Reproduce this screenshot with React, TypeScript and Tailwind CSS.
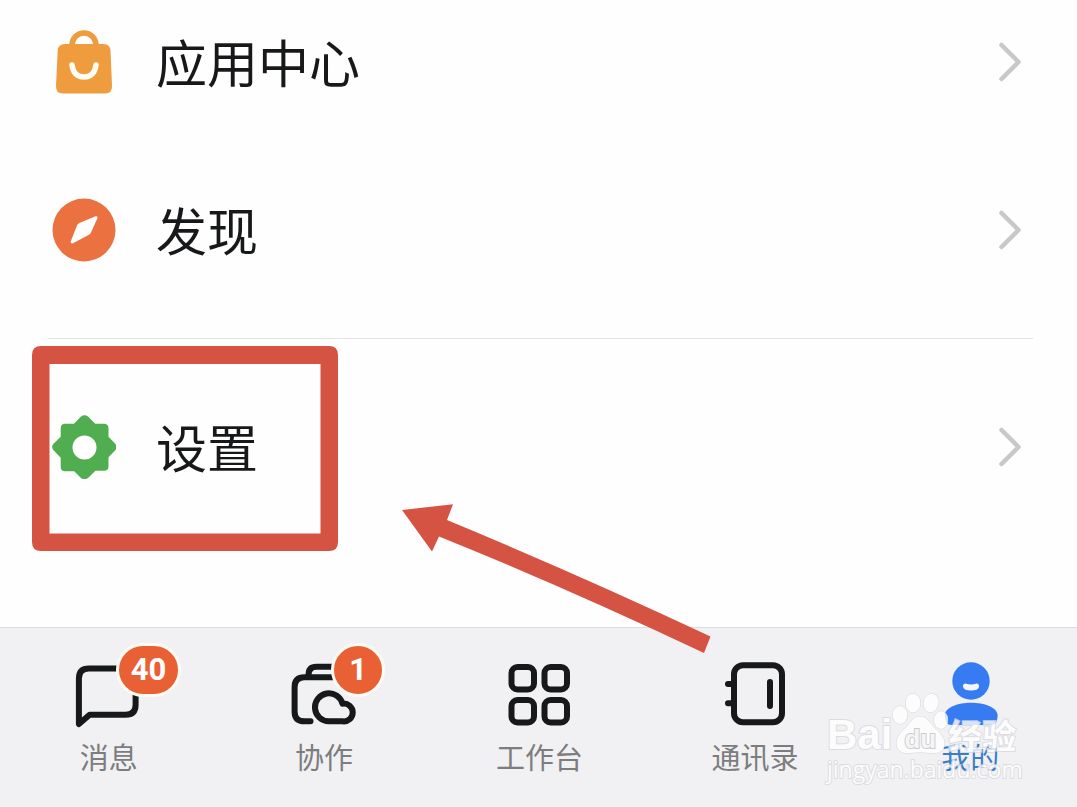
import type { ReactNode } from "react";

const menuIcons = {
    apps: (
        <svg className="size-16" viewBox="0 0 64 64" fill="none">
            <path d="M20 17v-2a12 12 0 0 1 24 0v2" stroke="#ee9c3e" strokeWidth="5.500" />
            <path d="M13 14h38.500q6.500 0 7 6.500l1.500 35.500q.3 7.500-7 7.500H11q-7.300 0-7-7.500l1.700-35.500q.4-6.500 7.300-6.500z" fill="#ee9c3e" />
            <path d="M20 35c1 7.500 5 12 12 12s11-4.500 12-12" stroke="#fffdf4" strokeWidth="5.500" strokeLinecap="round" />
        </svg>
    ),
    discover: (
        <svg className="size-16" viewBox="0 0 64 64">
            <circle cx="32" cy="32" r="31.500" fill="#eb7141" />
            <path d="M27.500 25 43.500 18.300q2.600-.7 1.900 1.900L39 34.500q-.7 1.500-2.500 2.500L21 45.300q-2.800.8-2.200-2L25 27.500q.8-1.700 2.500-2.500z" fill="#fff" />
        </svg>
    ),
    settings: (
        <svg className="size-16" viewBox="0 0 64 64">
            <path
                d="M29 1.500q3.500-2.500 7 0l7.300 7.200H52q4.500 0 4.500 4.500v8.500l7 7.300q2 3 0 6l-7 7.300v9q0 4.500-4.500 4.500h-8.500L36 63q-3.500 2.500-7 0l-6.800-6.700h-9q-4.500 0-4.500-4.500v-9L1.300 35q-2.300-3 0-6l7.400-7.300v-8.500q0-4.500 4.500-4.500h8.800z"
                fill="#50ad50"
            />
            <circle cx="32.500" cy="32.500" r="12" fill="#fff" />
        </svg>
    ),
};

const tabs = [
    {
        title: "消息",
        badge: "40",
        icon: (
            <path d="M2.900 62V16.500q0-10 10-10h36.700q10 0 10 10v26.200q0 10-10 10h-36Z" />
        ),
    },
    {
        title: "协作",
        badge: "1",
        icon: (
            <>
                <path d="M19.500 59.300h-6q-9.900 0-9.900-9.900V25.200q0-9.900 9.900-9.900H45" />
                <path d="M17.600 14v-1.500q0-7.800 7.800-7.800H45" />
                <path d="M37.900 59.300a14 14 0 1 1 13.600-17.600a8.900 8.900 0 1 1 0 17.600z" />
            </>
        ),
    },
    {
        title: "工作台",
        icon: (
            <>
                <rect x="5.500" y="5" width="22.500" height="22.500" rx="6" />
                <rect x="38.500" y="5" width="22.500" height="22.500" rx="6" />
                <rect x="5.500" y="38" width="22.500" height="22.500" rx="6" />
                <rect x="38.500" y="38" width="22.500" height="22.500" rx="6" />
            </>
        ),
    },
    {
        title: "通讯录",
        icon: (
            <>
                <rect x="12" y="3.300" width="48" height="57" rx="9" />
                <path d="M48 20v24M6 22h5M6 41.300h5" />
            </>
        ),
    },
    {
        title: "我的",
        active: true,
        icon: (
            <g stroke="none">
                <circle cx="34" cy="19" r="18.700" fill="#367bf2" />
                <path d="M28.500 21.500q5.500 2.200 11 0q2.500 0 2.500 2.500v1q-1 3.500-8 3.500T26 25v-1q0-2.500 2.500-2.500z" fill="#f1f6fd" />
                <path d="M7.700 53C8.500 45 21 40.700 34.200 40.700S60 45 60.700 53q0 10-7 10h-39q-7 0-7-10z" fill="#367bf2" />
            </g>
        ),
    },
];

function MenuRow({ icon, title }: { icon: ReactNode; title: string }) {
    return (
        <button type="button" className="flex h-[124px] w-full items-center pr-[55px] pl-[52px] text-left">
            {icon}
            <span className="ml-10 flex-1 pb-0.5 text-[51px] leading-[60px] text-[#17181a]">{title}</span>
            <svg className="h-10 w-6" viewBox="0 0 24 40" fill="none" stroke="#c8c8c8" strokeWidth="4.500" strokeLinecap="round" strokeLinejoin="round">
                <path d="m3.500 3 17 17-17 17" />
            </svg>
        </button>
    );
}

function Watermark() {
    return (
        <div className="pointer-events-none absolute right-14 bottom-6 w-[194px] font-bold text-white opacity-80 [-webkit-text-stroke:2px_#d8d8dc] [paint-order:stroke_fill]">
            <div className="flex h-[62px] items-end">
                <span className="font-['Liberation_Sans',sans-serif] text-[42px] leading-10">Bai</span>
                <div className="relative h-[62px] w-14">
                    <svg className="h-[62px] w-14" viewBox="0 0 56 62" fill="white" stroke="#d0d0d4">
                        <ellipse cx="8" cy="22" rx="7.500" ry="9" />
                        <ellipse cx="21" cy="10" rx="7.500" ry="9.500" />
                        <ellipse cx="39" cy="10" rx="7.500" ry="9.500" transform="rotate(12 39 10)" />
                        <ellipse cx="49" cy="27" rx="7" ry="9" />
                        <path d="M28 23.500c8 0 10 7 15 12 6 6 9.500 9 9.500 15 0 7-5 9.700-10.500 9.700-5 0-9-1-14-1s-8 1-13 1C9 60.200 4.500 57 4.500 50c0-6 4-10 9-15 5.500-5 7-11.500 14.500-11.500z" />
                    </svg>
                    <span className="absolute inset-x-0 bottom-1 text-center font-['Liberation_Sans',sans-serif] text-[26px] leading-6 text-[#f6f6f7] [-webkit-text-stroke:2px_#c4c4c8]">du</span>
                </div>
                <span className="text-[34px] leading-10">经验</span>
            </div>
            <div className="font-['Open_Sans',sans-serif] text-[23px] leading-7 font-normal">jingyan.baidu.com</div>
        </div>
    );
}

export default function App() {
    return (
        <div className="flex min-h-screen flex-col bg-[#fefefe] font-['Noto_Sans_CJK_SC',sans-serif]">
            <main className="flex-1">
                <div className="flex flex-col gap-11">
                    <MenuRow icon={menuIcons.apps} title="应用中心" />
                    <MenuRow icon={menuIcons.discover} title="发现" />
                </div>

                <hr className="mt-[46px] mr-11 mb-[46px] ml-12 border-[#e3e4e5]" />

                <div className="relative">
                    <MenuRow icon={menuIcons.settings} title="设置" />
                    {/* Highlight around the settings entry */}
                    <svg className="pointer-events-none absolute -top-[39px] left-8 h-[205px] w-[306px]" viewBox="0 0 306 205">
                        <path fillRule="evenodd" d="M9 0h288q9 0 9 9v187q0 9-9 9H9q-9 0-9-9V9Q0 0 9 0zM17.500 18v169.500h271V18z" fill="#d55343" />
                    </svg>
                    <svg className="pointer-events-none absolute top-[119px] left-[402px] z-10 h-[150px] w-[310px]" viewBox="0 0 310 150">
                        <path d="M0 6 51 .3 45 16Q180 72 308.500 132.500L302 149Q160 82 37 32.500L30 47.500z" fill="#d55343" />
                    </svg>
                </div>
            </main>

            {/* Tab bar */}
            <nav className="relative grid h-[180px] grid-cols-5 border-t border-[#dddddf] bg-[#f1f1f3]">
                {tabs.map((tab) => (
                    <a key={tab.title} href="#" className="flex flex-col items-center pt-[34px]">
                        <span className="relative">
                            <svg className="size-16 overflow-visible" viewBox="0 0 64 64" fill="none" stroke="#17181a" strokeWidth="6" strokeLinecap="round" strokeLinejoin="round">
                                {tab.icon}
                            </svg>
                            {tab.badge && (
                                <span className="absolute -top-[19px] left-10 flex h-[54px] min-w-[54px] items-center justify-center rounded-full border-3 border-[#fffaf2] bg-[#ea6035] px-3 font-[Roboto,sans-serif] text-[31px] leading-8 font-bold text-white">
                                    {tab.badge}
                                </span>
                            )}
                        </span>
                        <span className={tab.active ? "mt-2.5 pl-0.5 text-[29px] leading-10 text-[#3b7cc9]" : "mt-2.5 pl-0.5 text-[29px] leading-10 text-[#7d7d7f]"}>
                            {tab.title}
                        </span>
                    </a>
                ))}
                <Watermark />
            </nav>
        </div>
    );
}
